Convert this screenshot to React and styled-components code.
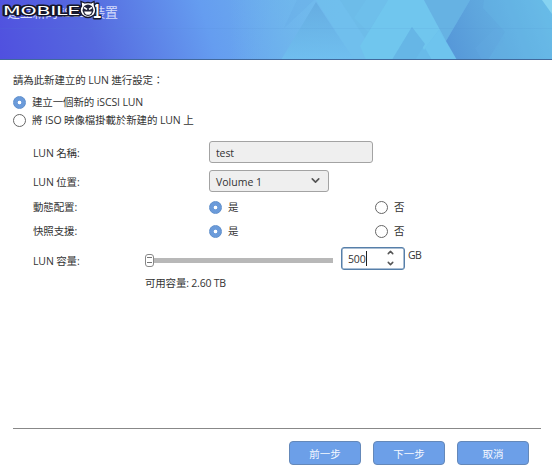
import React, { useState } from "react";
import styled, { createGlobalStyle } from "styled-components";
import { ChevronDown, ChevronUp } from "lucide-react";

const GlobalStyle = createGlobalStyle`
  body {
    margin: 0;
    background: #fff;
    color: #333;
    font-family: "Open Sans", "Noto Sans CJK TC", sans-serif;
    font-size: 10.5px;
    letter-spacing: -0.13px;
  }
  * {
    box-sizing: border-box;
  }
`;

const Wizard = styled.div`
  width: 552px;
  height: 473px;
  display: flex;
  flex-direction: column;
  overflow: hidden;
`;

const Header = styled.header`
  position: relative;
  flex: none;
  height: 60px;
  padding: 3px 0 0 7px;
  border-bottom: 1px solid #41699c;
  background: #72bdec;
  overflow: hidden;
`;

const HeaderArt = styled.svg`
  position: absolute;
  left: 0;
  top: 0;
`;

const Title = styled.h1`
  position: relative;
  margin: 0;
  color: #d5dcfa;
  font-size: 13px;
  line-height: 18px;
  font-weight: 400;
  letter-spacing: -0.25px;
  white-space: nowrap;
`;

const Watermark = styled.svg`
  position: absolute;
  left: 0;
  top: 0;
`;

const Body = styled.main`
  flex: none;
  height: 368px;
  padding: 11px 0 0 13px;
`;

const Line = styled.div`
  line-height: 18px;
  height: 18px;
  white-space: nowrap;
`;

const Options = styled.div`
  display: flex;
  flex-direction: column;
  padding-top: 4px;
`;

const RadioLabel = styled.label`
  display: flex;
  align-items: center;
  gap: 6px;
  height: 18px;
  line-height: 18px;
  white-space: nowrap;
`;

const RadioDot = styled.span`
  flex: none;
  width: 13px;
  height: 13px;
  border-radius: 50%;
  border: 1px solid ${(props) => (props.$checked ? "#5f8fcc" : "#666")};
  background: ${(props) =>
    props.$checked
      ? "radial-gradient(circle, #fff 0 1.4px, #6b9bda 2.2px)"
      : "#fff"};
`;

const Form = styled.div`
  padding: 12px 0 0 20px;
`;

const Row = styled.div`
  display: grid;
  grid-template-columns: ${(props) => props.$columns || "176px 166px 1fr"};
  align-items: center;
  height: ${(props) => props.$height || "24px"};
  margin: ${(props) => props.$margin || "0"};
`;

const FieldLabel = styled.span`
  line-height: 18px;
  padding-top: ${(props) => props.$drop || "0"};
  white-space: nowrap;
`;

const TextInput = styled.input`
  width: 164px;
  height: 22px;
  padding: 2px 6px 0;
  border: 1px solid #a3a3a3;
  border-radius: 3px;
  background: #efefef;
  color: #333;
  font: inherit;
  letter-spacing: inherit;
  outline: none;
`;

const Select = styled.button`
  display: flex;
  align-items: center;
  justify-content: space-between;
  width: 120px;
  height: 22px;
  padding: 2px 6px 0;
  border: 1px solid #a3a3a3;
  border-radius: 3px;
  background: #efefef;
  color: #333;
  font: inherit;

  & svg {
    margin-top: -3px;
  }
`;

const Slider = styled.div`
  display: flex;
  align-items: center;
  width: 188px;
  margin-top: 4px;
`;

const Thumb = styled.span`
  flex: none;
  display: flex;
  align-items: center;
  justify-content: center;
  width: 9px;
  height: 13px;
  border: 1px solid #888;
  border-radius: 3px;
  background: #fff;

  &::after {
    content: "";
    width: 5px;
    height: 4px;
    border: solid #777;
    border-width: 1px 0;
  }
`;

const Track = styled.span`
  flex: 1;
  height: 5px;
  background: #b8b8b8;
`;

const Spinner = styled.div`
  display: flex;
  align-items: center;
  justify-content: space-between;
  width: 64px;
  height: 23px;
  padding: 0 9px 0 6px;
  border: 1px solid #567fa9;
  border-radius: 3px;
  background: #fff;
  box-shadow: inset 0 0 0 0.5px #567fa9;
`;

const SpinValue = styled.span`
  line-height: 14px;
  padding-top: 1px;
  border-right: 1px solid #222;
`;

const Arrows = styled.span`
  display: flex;
  flex-direction: column;
  gap: 2px;

  & svg {
    display: block;
  }
`;

const Unit = styled.span`
  margin: -6px 0 0 3px;
  letter-spacing: -0.7px;
`;

const Available = styled.div`
  padding: 1px 0 0 112px;
  line-height: 18px;
  letter-spacing: -0.2px;
`;

const Footer = styled.footer`
  display: flex;
  justify-content: flex-end;
  gap: 12px;
  margin: 0 11px 0 13px;
  padding: 12px 12px 0 0;
  border-top: 1px solid #888;
`;

const Button = styled.button`
  width: 72px;
  height: 24px;
  padding: 0;
  border: 1px solid #6488b9;
  border-radius: 4px;
  background: #6c9fe8;
  color: #f4f8ff;
  font: inherit;
`;

function Radio({ checked, children, onSelect }) {
  return (
    <RadioLabel onClick={onSelect}>
      <RadioDot $checked={checked} />
      {children}
    </RadioLabel>
  );
}

function YesNo({ label }) {
  const [value, setValue] = useState(true);
  return (
    <Row>
      <FieldLabel>{label}</FieldLabel>
      <Radio checked={value} onSelect={() => setValue(true)}>
        是
      </Radio>
      <Radio checked={!value} onSelect={() => setValue(false)}>
        否
      </Radio>
    </Row>
  );
}

function Banner() {
  return (
    <HeaderArt width="552" height="60" viewBox="0 0 552 60">
      <defs>
        <linearGradient id="sky" x1="0" y1="60" x2="300" y2="-35" gradientUnits="userSpaceOnUse">
          <stop offset="0" stopColor="#5050df" />
          <stop offset="0.3" stopColor="#5569df" />
          <stop offset="0.66" stopColor="#659df0" />
          <stop offset="1" stopColor="#70b5eb" />
        </linearGradient>
        <linearGradient id="peak" x1="0" y1="0" x2="0" y2="1">
          <stop offset="0" stopColor="#63a9de" />
          <stop offset="1" stopColor="#70c1f0" />
        </linearGradient>
        <linearGradient id="deep" x1="445" y1="50" x2="552" y2="10" gradientUnits="userSpaceOnUse">
          <stop offset="0" stopColor="#5596d8" />
          <stop offset="0.35" stopColor="#5ea5dd" />
          <stop offset="1" stopColor="#69bde8" />
        </linearGradient>
        <linearGradient id="fade" x1="230" y1="0" x2="340" y2="0" gradientUnits="userSpaceOnUse">
          <stop offset="0" stopColor="#70bbed" stopOpacity="0" />
          <stop offset="1" stopColor="#70bbed" />
        </linearGradient>
      </defs>
      <rect width="552" height="60" fill="url(#sky)" />
      <path d="M230 0H552V60H230Z" fill="url(#fade)" />
      <path d="M297 0H314L284 28Z" fill="#65a7e2" opacity="0.25" />
      <path d="M316 2L354 60H281Z" fill="url(#peak)" opacity="0.75" />
      <path d="M316 0H340L382 60H354Z" fill="#71c0ed" opacity="0.7" />
      <path d="M340 0H390L366 40Z" fill="#6dbce9" />
      <path d="M388 0H424L446 41L434 60H366L360 46Z" fill="#70c6ee" />
      <path d="M366 0H388L368 32L354 18Z" fill="#70c2ec" opacity="0.6" />
      <path d="M412 27L392 60H457L439 30L424 50Z" fill="#68bae9" />
      <path d="M412 27L425 44L415 60H392Z" fill="#66b6e6" />
      <path d="M439 30L457 60H432L425 48Z" fill="#6ec4ee" />
      <path d="M424 0H470L446 41Z" fill="#66b2e3" />
      <path d="M470 0H552V60H457L446 41Z" fill="url(#deep)" />
      <path d="M484 0H542L552 14V60H488L505 32L483 8Z" fill="#66b8e8" opacity="0.3" />
      <path d="M496 27L475 48L482 60H490L505 38Z" fill="#65ade3" opacity="0.25" />
      <path d="M542 0H552V14Z" fill="#86d3f1" />
      <path d="M0 28.5H552" stroke="#4b85cd" strokeOpacity="0.1" />
    </HeaderArt>
  );
}

function MobileMark() {
  return (
    <Watermark width="110" height="22" viewBox="0 0 110 22">
      <g
        fill="#fff"
        stroke="#15172c"
        strokeWidth="2.8"
        strokeLinejoin="round"
        fontFamily="DejaVu Sans, sans-serif"
        style={{ paintOrder: "stroke" }}
      >
        <text x="3" y="14.5" fontSize="12" textLength="77" lengthAdjust="spacingAndGlyphs">
          MOBILE
        </text>
        <text x="93" y="17.5" fontSize="20" fontFamily="Liberation Sans, sans-serif" fontWeight="700" textLength="8" lengthAdjust="spacingAndGlyphs">
          1
        </text>
      </g>
      <path d="M81.5 6L81 1.5L85 3Q88 2 91 3L94 1.5L94.5 6Q97 11 94 15Q88 20 82 15Q78.5 10 81.5 6Z" fill="#fff" stroke="#15172c" strokeWidth="1.3" />
      <ellipse cx="88" cy="10.2" rx="5.4" ry="5.8" fill="#20233b" />
      <path d="M84 7.5L87.1 9.4M92 7.5L89 9.4" stroke="#fff" strokeWidth="1.5" />
      <path d="M84.2 11.4H91.8Q91 14.8 88 14.8T84.2 11.4Z" fill="#fff" />
    </Watermark>
  );
}

function App() {
  const [mode, setMode] = useState("new");
  const [name, setName] = useState("test");

  return (
    <Wizard>
      <GlobalStyle />
      <Header>
        <Banner />
        <Title>建立新的 iSCSI 裝置</Title>
        <MobileMark />
      </Header>
      <Body>
        <Line>請為此新建立的 LUN 進行設定：</Line>
        <Options>
          <Radio checked={mode === "new"} onSelect={() => setMode("new")}>
            建立一個新的 iSCSI LUN
          </Radio>
          <Radio checked={mode === "iso"} onSelect={() => setMode("iso")}>
            將 ISO 映像檔掛載於新建的 LUN 上
          </Radio>
        </Options>
        <Form>
          <Row $height="22px">
            <FieldLabel $drop="2px">LUN 名稱:</FieldLabel>
            <TextInput value={name} onChange={(e) => setName(e.target.value)} />
          </Row>
          <Row $height="22px" $margin="7px 0 3px">
            <FieldLabel $drop="2px">LUN 位置:</FieldLabel>
            <Select type="button">
              Volume 1
              <ChevronDown size={13} strokeWidth={3} color="#555" />
            </Select>
          </Row>
          <YesNo label="動態配置:" />
          <YesNo label="快照支援:" />
          <Row $height="30px" $columns="112px 196px 64px 1fr">
            <FieldLabel $drop="6px">LUN 容量:</FieldLabel>
            <Slider>
              <Thumb />
              <Track />
            </Slider>
            <Spinner>
              <SpinValue>500</SpinValue>
              <Arrows>
                <ChevronUp size={9} strokeWidth={4} color="#555" />
                <ChevronDown size={9} strokeWidth={4} color="#555" />
              </Arrows>
            </Spinner>
            <Unit>GB</Unit>
          </Row>
          <Available>可用容量: 2.60 TB</Available>
        </Form>
      </Body>
      <Footer>
        <Button>前一步</Button>
        <Button>下一步</Button>
        <Button>取消</Button>
      </Footer>
    </Wizard>
  );
}

export default App;
